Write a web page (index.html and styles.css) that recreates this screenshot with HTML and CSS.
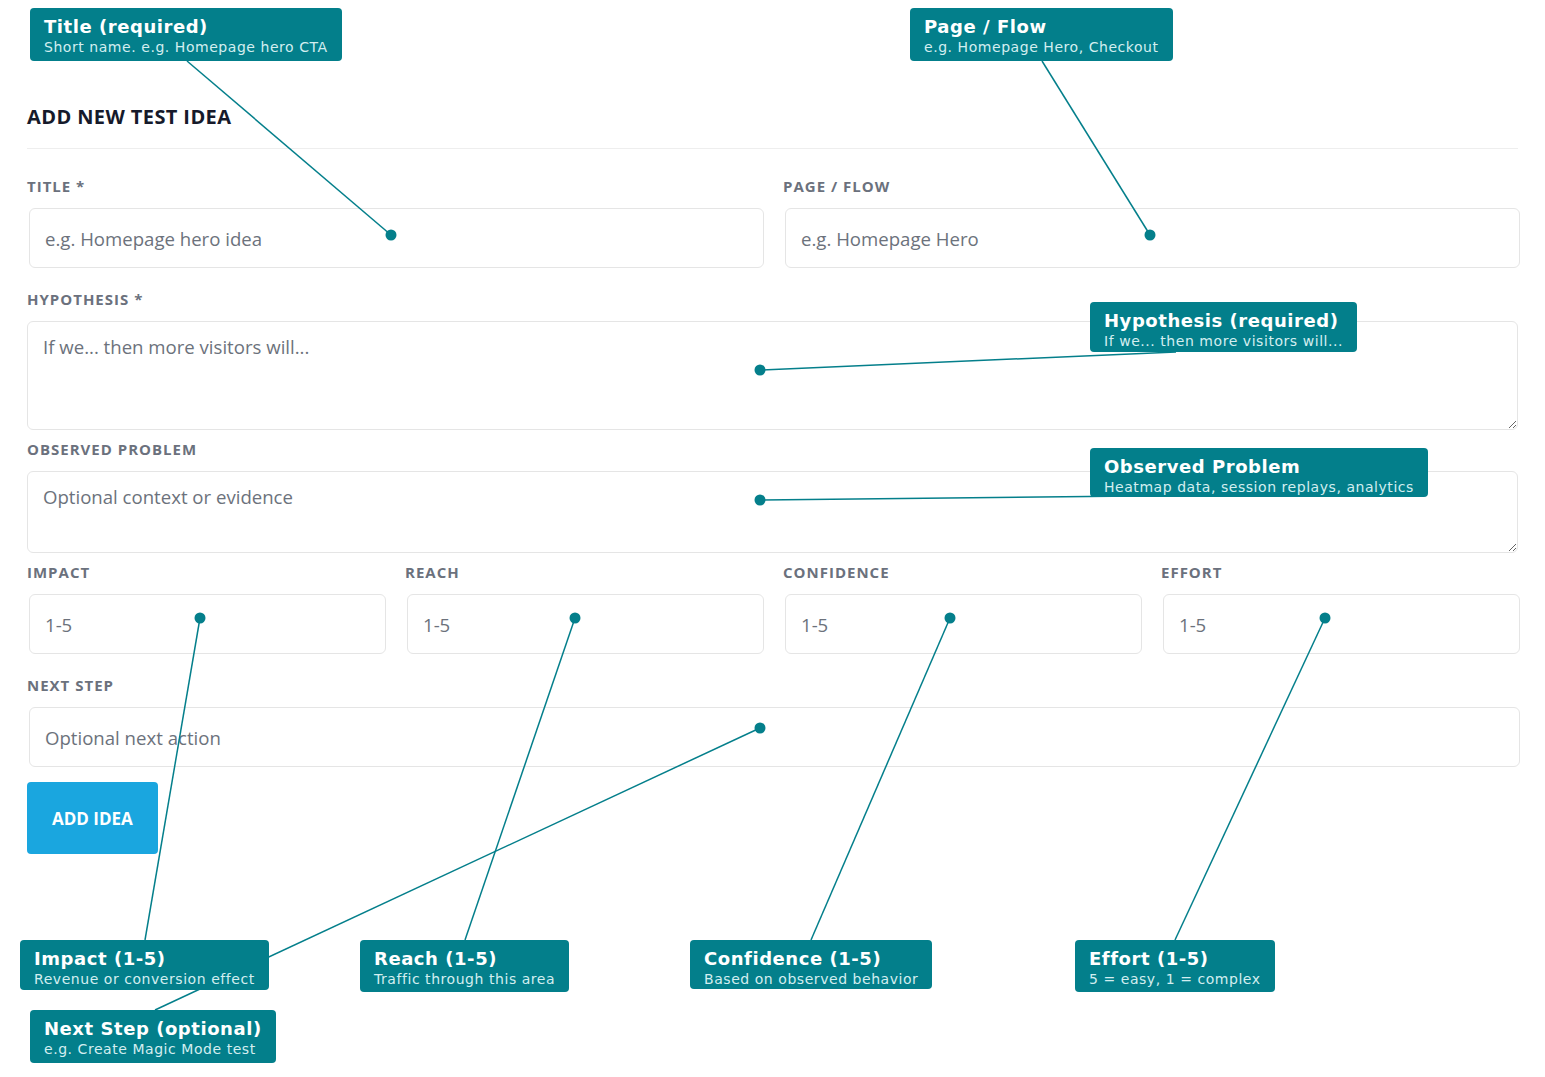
FILE: index.html
```html
<!DOCTYPE HTML>
<html>
<head>
<meta charset="utf-8">
<title>Add new test idea</title>
<link rel="stylesheet" href="styles.css">
</head>

<body>
<div id="page">
	<form class="idea-form" onsubmit="return false;">
		<h2 class="form-title">ADD NEW TEST IDEA</h2>

		<div class="row two">
			<div class="field">
				<label>TITLE *</label>
				<input type="text" placeholder="e.g. Homepage hero idea">
			</div>
			<div class="field">
				<label>PAGE / FLOW</label>
				<input type="text" placeholder="e.g. Homepage Hero">
			</div>
		</div>

		<div class="field area">
			<label>HYPOTHESIS *</label>
			<textarea class="tall" placeholder="If we... then more visitors will..."></textarea>
		</div>

		<div class="field area">
			<label>OBSERVED PROBLEM</label>
			<textarea class="short" placeholder="Optional context or evidence"></textarea>
		</div>

		<div class="row four">
			<div class="field">
				<label>IMPACT</label>
				<input type="text" placeholder="1-5">
			</div>
			<div class="field">
				<label>REACH</label>
				<input type="text" placeholder="1-5">
			</div>
			<div class="field">
				<label>CONFIDENCE</label>
				<input type="text" placeholder="1-5">
			</div>
			<div class="field">
				<label>EFFORT</label>
				<input type="text" placeholder="1-5">
			</div>
		</div>

		<div class="field">
			<label>NEXT STEP</label>
			<input type="text" placeholder="Optional next action">
		</div>

		<button type="submit" class="btn-add">ADD IDEA</button>
	</form>

	<!-- annotation lines -->
	<svg class="connectors" width="1545" height="1077" viewBox="0 0 1545 1077">
		<g stroke="#047f8b" stroke-width="1.5" fill="none">
			<line x1="187" y1="61" x2="391" y2="235"/>
			<line x1="1042" y1="61" x2="1150" y2="235"/>
			<line x1="1176" y1="352" x2="760" y2="370"/>
			<line x1="1136" y1="496" x2="760" y2="500"/>
			<line x1="145" y1="940" x2="200" y2="618"/>
			<line x1="465" y1="940" x2="575" y2="618"/>
			<line x1="811" y1="940" x2="950" y2="618"/>
			<line x1="1175" y1="940" x2="1325" y2="618"/>
			<line x1="155" y1="1010" x2="760" y2="728"/>
		</g>
		<g fill="#047f8b">
			<circle cx="391" cy="235" r="5.5"/>
			<circle cx="1150" cy="235" r="5.5"/>
			<circle cx="760" cy="370" r="5.5"/>
			<circle cx="760" cy="500" r="5.5"/>
			<circle cx="200" cy="618" r="5.5"/>
			<circle cx="575" cy="618" r="5.5"/>
			<circle cx="950" cy="618" r="5.5"/>
			<circle cx="1325" cy="618" r="5.5"/>
			<circle cx="760" cy="728" r="5.5"/>
		</g>
	</svg>

	<div class="note n-title"><b>Title (required)</b><span>Short name. e.g. Homepage hero CTA</span></div>
	<div class="note n-page"><b>Page / Flow</b><span>e.g. Homepage Hero, Checkout</span></div>
	<div class="note n-hypo"><b>Hypothesis (required)</b><span>If we... then more visitors will...</span></div>
	<div class="note n-problem"><b>Observed Problem</b><span>Heatmap data, session replays, analytics</span></div>
	<div class="note n-impact"><b>Impact (1-5)</b><span>Revenue or conversion effect</span></div>
	<div class="note n-reach"><b>Reach (1-5)</b><span>Traffic through this area</span></div>
	<div class="note n-conf"><b>Confidence (1-5)</b><span>Based on observed behavior</span></div>
	<div class="note n-effort"><b>Effort (1-5)</b><span>5 = easy, 1 = complex</span></div>
	<div class="note n-next"><b>Next Step (optional)</b><span>e.g. Create Magic Mode test</span></div>
</div>
</body>
</html>
```

FILE: styles.css
```css
* {margin:0; padding:0; box-sizing:border-box;}
body{background:#fff; font-family:"Open Sans", "Liberation Sans", sans-serif;}

#page{
	position:relative;
	width:1545px;
	height:1077px;
	overflow:hidden;
}

.idea-form{
	width:1491px;
	margin-left:27px;
	padding-top:104px;
}
.form-title{
	font-size:20px;
	line-height:26px;
	font-weight:700;
	letter-spacing:0.4px;
	color:#161a2b;
	padding-bottom:18px;
	border-bottom:1px solid #eeeeee;
	margin-bottom:27px;
}

.row{display:grid; column-gap:21px;}
.row.two{grid-template-columns:1fr 1fr;}
.row.four{grid-template-columns:repeat(4, 1fr);}

.field{margin-bottom:21px;}
.field.area{margin-bottom:9px;}
.field label{
	display:block;
	font-size:15px;
	line-height:20px;
	font-weight:700;
	letter-spacing:1px;
	color:#6b717d;
	margin-bottom:12px;
}

.field input,
.field textarea{
	display:block;
	width:100%;
	border:1px solid #e5e5e5;
	border-radius:6px;
	background:#fff;
	font-family:"Open Sans", "Liberation Sans", sans-serif;
	font-size:18.6px;
	color:#333;
	outline:none;
}
.field input{
	height:60px;
	margin-left:2px;
	padding:1px 15px 0 15px;
}
.field textarea{
	padding:12px 15px;
	line-height:25px;
	resize:vertical;
}
.field textarea.tall{height:109px;}
.field textarea.short{height:82px;}
.field input::placeholder,
.field textarea::placeholder{color:#6c727c; opacity:1;}

.btn-add{
	display:block;
	margin-top:-6px;
	height:72px;
	padding:0 25px;
	border:none;
	border-radius:4px;
	background:#1aa6df;
	color:#fff;
	font-family:"Open Sans", "Liberation Sans", sans-serif;
	font-size:17px;
	font-weight:700;
	cursor:pointer;
}

.connectors{
	position:absolute;
	left:0;
	top:0;
	pointer-events:none;
}

/* callouts */
.note{
	position:absolute;
	z-index:5;
	background:#037f8b;
	border-radius:4px;
	padding:7px 14px 0 14px;
	font-family:"DejaVu Sans", sans-serif;
	letter-spacing:0.55px;
	white-space:nowrap;
}
.note b{
	display:block;
	font-size:18px;
	line-height:24px;
	font-weight:700;
	color:#fff;
}
.note span{
	display:block;
	font-size:14px;
	line-height:17px;
	color:#d3eef0;
}
.n-title{left:30px; top:8px; height:53px;}
.n-page{left:910px; top:8px; height:53px;}
.n-hypo{left:1090px; top:302px; height:50px;}
.n-problem{left:1090px; top:448px; height:49px;}
.n-impact{left:20px; top:940px; height:50px;}
.n-reach{left:360px; top:940px; height:52px;}
.n-conf{left:690px; top:940px; height:49px;}
.n-effort{left:1075px; top:940px; height:52px;}
.n-next{left:30px; top:1010px; height:53px;}
```
